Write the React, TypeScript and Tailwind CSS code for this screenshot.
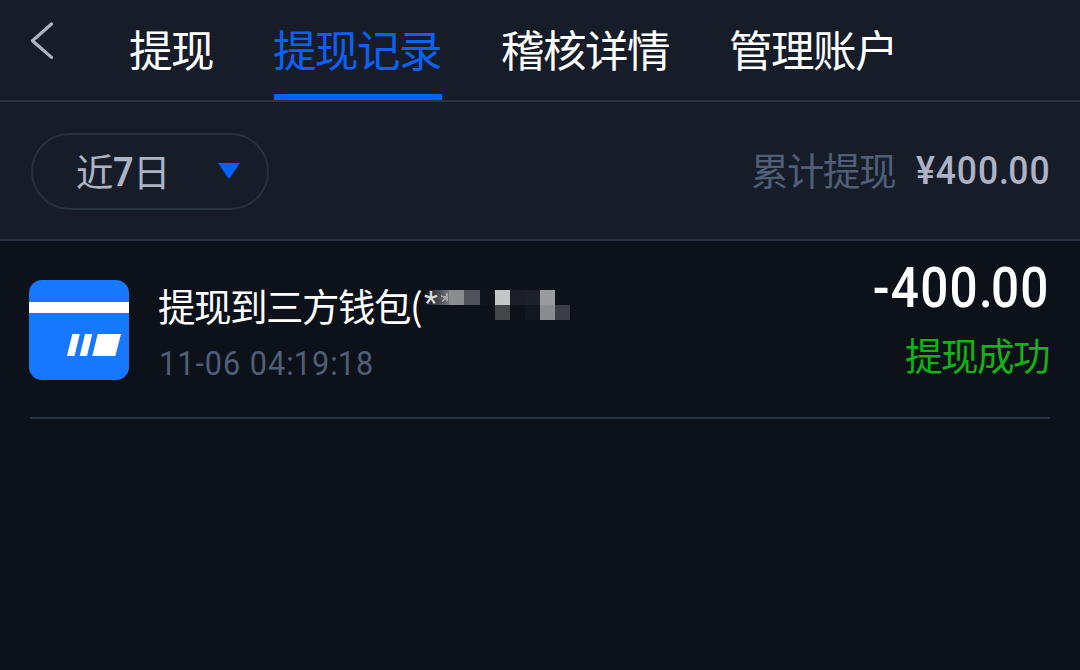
import React from "react";

const tabs = ["提现", "提现记录", "稽核详情", "管理账户"];
const active = 1;

function BackIcon() {
  return (
    <svg width="24" height="38" viewBox="0 0 24 38" fill="none" className="block">
      <path d="M21.5 2 L2.5 18.7 L21.5 35.4" stroke="#adb3c4" strokeWidth="3.2" strokeLinecap="round" strokeLinejoin="round" />
    </svg>
  );
}

function WalletIcon() {
  return (
    <svg width="100" height="100" viewBox="0 0 100 100" className="block">
      <rect width="100" height="100" rx="13" fill="#1677ff" />
      <rect y="22" width="100" height="11" fill="#fff" />
      <path d="M43.3 54H50.8L45.5 76H38Z M56 54H63.3L58 76H50.7Z M68.7 54H92L86.3 76H63.3Z" fill="#fff" />
    </svg>
  );
}

/* Condensed figures: punctuation is set tighter than the digits. */
function Figures({ text, className, tight }: { text: string; className: string; tight: string }) {
  return (
    <span className={`inline-block font-[Roboto,sans-serif] whitespace-nowrap ${className}`}>
      {text.split(/([.:])/).map((part, i) => (
        <span key={i} className={part === "." || part === ":" ? tight : undefined}>
          {part}
        </span>
      ))}
    </span>
  );
}

/* Pixelated blocks that hide the account number. */
function Mask() {
  const cells: [number, number, number, string][] = [
    [25, 0, 15, "#8b8c90"],
    [40, 0, 16, "#50535a"],
    [56, 0, 15, "#10141c"],
    [71, 0, 15, "#c3c5c7"],
    [86, 0, 15, "#1c1f27"],
    [101, 0, 15, "#1c212b"],
    [116, 0, 15, "#999b9e"],
    [71, 15, 15, "#434548"],
    [101, 15, 15, "#131820"],
    [116, 15, 15, "#8b8c90"],
    [131, 15, 15, "#3c3e45"],
  ];
  return (
    <svg width="146" height="30" viewBox="0 0 146 30" className="block" shapeRendering="crispEdges">
      <defs>
        <linearGradient id="fade" x1="0" x2="1">
          <stop offset="0" stopColor="#75767c" stopOpacity="0" />
          <stop offset="1" stopColor="#75767c" />
        </linearGradient>
      </defs>
      <rect width="25" height="15" fill="url(#fade)" />
      <path d="M17 6L24 8M23 3V11M18 11L24 7" stroke="#a2a3a7" strokeWidth="1.6" />
      {cells.map(([x, y, w, c]) => (
        <rect key={`${x}-${y}`} x={x} y={y} width={w} height="15" fill={c} />
      ))}
    </svg>
  );
}

export default function App() {
  return (
    <div className="flex h-[670px] w-[1080px] flex-col overflow-hidden bg-[#0d1119] font-['Noto_Sans_CJK_SC',sans-serif] text-white">
      <header className="flex h-[102px] shrink-0 border-b-2 border-[#2a3342] bg-[#161d28] pl-[30px]">
        <button className="mr-[76px] h-[38px] pt-[22px]" aria-label="返回">
          <BackIcon />
        </button>
        <nav className="flex gap-[60px]">
          {tabs.map((t, i) => (
            <a
              key={t}
              className={
                i === active
                  ? "h-[100px] border-b-[6px] border-[#0560ff] text-[43.5px] leading-[97px] tracking-[-1.5px] text-[#0d60f5]"
                  : "h-[100px] text-[43.5px] leading-[97px] tracking-[-1.5px]"
              }
            >
              <span className="-ml-px mr-px">{t}</span>
            </a>
          ))}
        </nav>
      </header>

      <section className="flex h-[139px] shrink-0 items-start justify-between border-b-2 border-[#2a3342] bg-[#161d28] pr-[30px] pl-[31px] pt-[31px]">
        <button className="flex h-[77px] w-[238px] items-center justify-between rounded-full border-2 border-[#283140] pr-[27px] pl-[43px] text-[37.5px] leading-[72px] tracking-[-1.5px] text-[#adb3c4]">
          <span className="flex items-center pb-[3px]">
            近
            <span className="w-[21px] origin-center scale-x-90 pt-[5px] text-center font-[Roboto,sans-serif] text-[40px] font-semibold">7</span>
            日
          </span>
          <svg width="22" height="16" viewBox="0 0 22 16" className="mb-px block">
            <path d="M0 0H22L11 16Z" fill="#0560ff" />
          </svg>
        </button>
        <div className="flex items-start leading-[76px]">
          <span className="-mt-[2px] text-[37.5px] tracking-[-1.5px] text-[#505e77]">累计提现</span>
          <span className="flex w-[155px] justify-end">
            <Figures
              text="¥400.00"
              className="-mr-px origin-right scale-x-90 text-[39.5px] font-medium tracking-[1px] text-[#adb3c4]"
              tight="tracking-[-0.7px]"
            />
          </span>
        </div>
      </section>

      <main className="px-[30px]">
        <article className="flex h-[178px] items-start border-b-2 border-[#2a3342]">
          <div className="-ml-px mt-[39px]">
            <WalletIcon />
          </div>
          <div className="ml-[29px] flex flex-col items-start">
            <div className="relative h-[60px] pt-[34px] text-[37.5px] leading-[60px] tracking-[-1.5px]">
              <span className="whitespace-nowrap">提现到三方钱包(</span>
              <span className="absolute top-[49px] left-[266px]">
                <Mask />
              </span>
              <span className="absolute top-[31px] left-[266px] font-[Roboto,sans-serif] text-[32px] leading-[60px] text-[#d8d9db]">*</span>
            </div>
            <Figures
              text="11-06 04:19:18"
              className="mt-[42px] ml-px origin-left scale-x-90 text-[34px] leading-[40px] tracking-[1.1px] text-[#505e77]"
              tight="tracking-[0.2px]"
            />
          </div>
          <div className="ml-auto flex flex-col items-end">
            <Figures
              text="-400.00"
              className="mt-[15px] origin-right scale-x-90 text-[55px] leading-[64px] font-medium tracking-[1.4px]"
              tight="tracking-[-2px]"
            />
            <span className="mr-px mt-[4px] text-[37.5px] leading-[60px] tracking-[-1.5px] text-[#12b312]">提现成功</span>
          </div>
        </article>
      </main>
    </div>
  );
}
